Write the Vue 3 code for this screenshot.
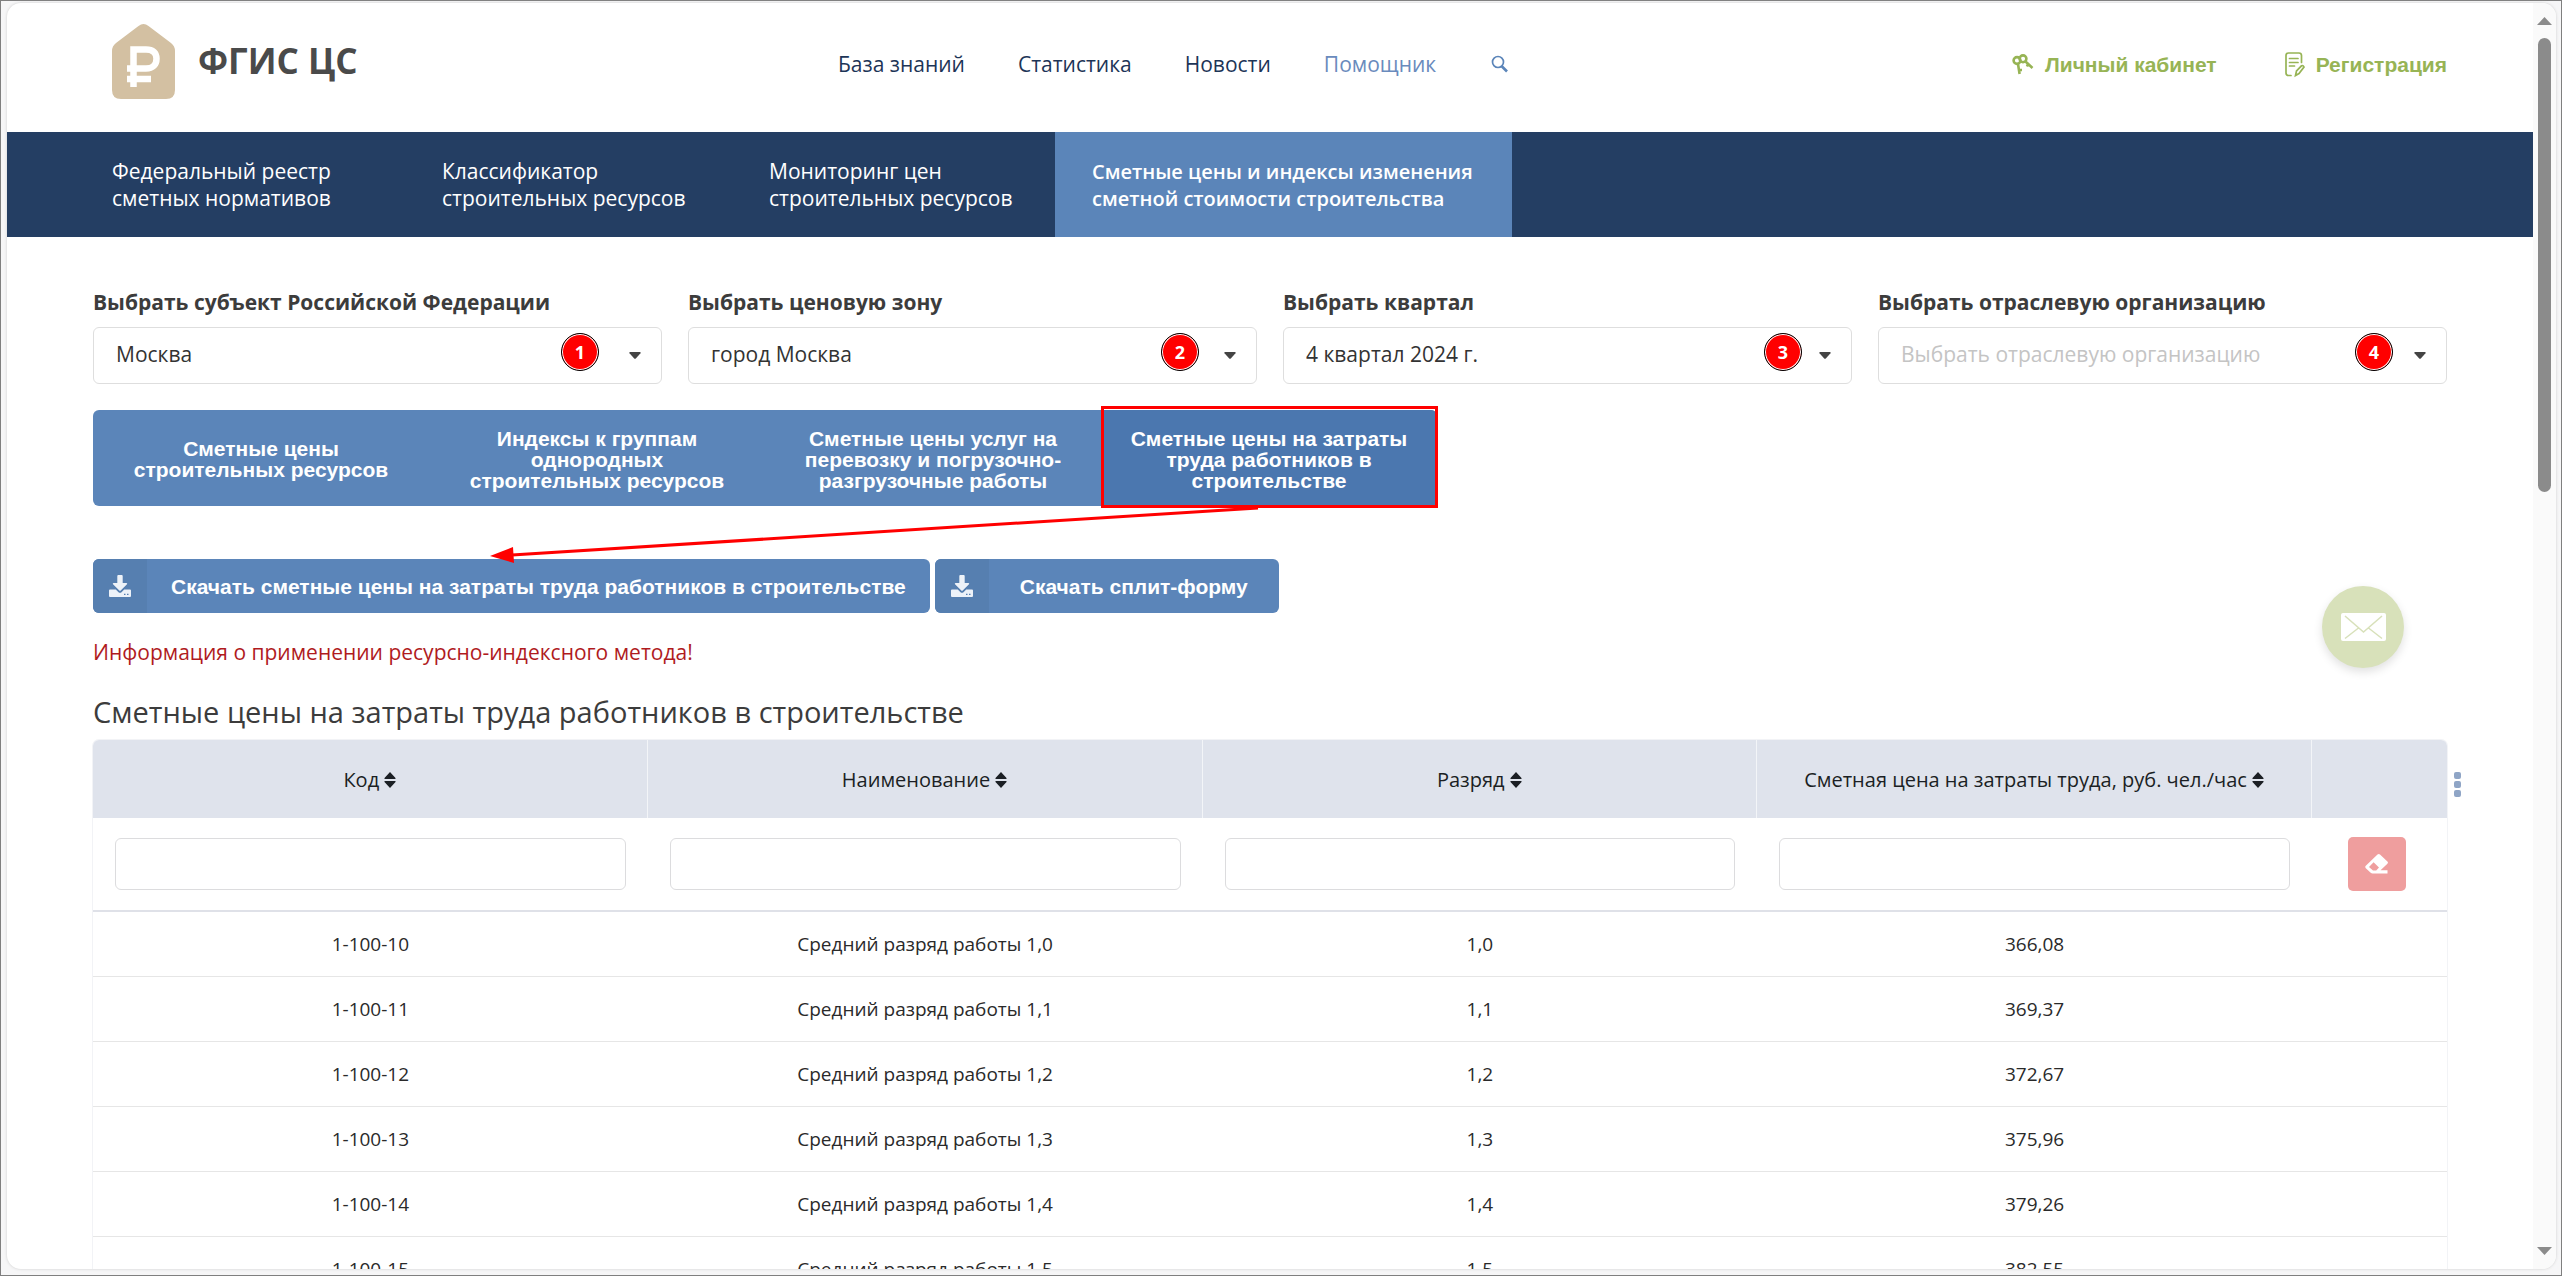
<script setup>
import { ref } from 'vue'

const topLinks = [
  { text: 'База знаний' },
  { text: 'Статистика' },
  { text: 'Новости' },
  { text: 'Помощник', accent: true },
]

const sections = [
  { lines: ['Федеральный реестр', 'сметных нормативов'] },
  { lines: ['Классификатор', 'строительных ресурсов'] },
  { lines: ['Мониторинг цен', 'строительных ресурсов'] },
  { lines: ['Сметные цены и индексы изменения', 'сметной стоимости строительства'], active: true },
]

const filters = [
  { id: 'region', label: 'Выбрать субъект Российской Федерации', value: 'Москва', mark: 1, markRight: 63 },
  { id: 'zone', label: 'Выбрать ценовую зону', value: 'город Москва', mark: 2, markRight: 58 },
  { id: 'quarter', label: 'Выбрать квартал', value: '4 квартал 2024 г.', mark: 3, markRight: 50 },
  { id: 'org', label: 'Выбрать отраслевую организацию', value: 'Выбрать отраслевую организацию', empty: true, mark: 4, markRight: 54 },
]

const tabs = [
  { lines: ['Сметные цены', 'строительных ресурсов'] },
  { lines: ['Индексы к группам', 'однородных', 'строительных ресурсов'] },
  { lines: ['Сметные цены услуг на', 'перевозку и погрузочно-', 'разгрузочные работы'] },
  { lines: ['Сметные цены на затраты', 'труда работников в', 'строительстве'], active: true },
]

const downloads = ['Скачать сметные цены на затраты труда работников в строительстве', 'Скачать сплит-форму']

const columns = ['Код', 'Наименование', 'Разряд', 'Сметная цена на затраты труда, руб. чел./час']
const search = ref(['', '', '', ''])

const rows = [
  ['1-100-10', 'Средний разряд работы 1,0', '1,0', '366,08'],
  ['1-100-11', 'Средний разряд работы 1,1', '1,1', '369,37'],
  ['1-100-12', 'Средний разряд работы 1,2', '1,2', '372,67'],
  ['1-100-13', 'Средний разряд работы 1,3', '1,3', '375,96'],
  ['1-100-14', 'Средний разряд работы 1,4', '1,4', '379,26'],
  ['1-100-15', 'Средний разряд работы 1,5', '1,5', '382,55'],
]
</script>

<template>
  <div class="frame">
    <div class="window">
      <div class="page">
        <header class="header">
          <a class="brand" href="#">
            <svg class="logo" viewBox="0 0 63 75" aria-hidden="true">
              <path fill="#d3c0a2" d="M26.500 2Q31.500 -2 36.500 2L59 19Q63 22 63 27V66Q63 75 54 75H9Q0 75 0 66V27Q0 22 4 19Z" />
              <path fill="none" stroke="#fff" stroke-width="6.500" d="M21.500 63V25.500H34C41 25.500 44.500 29 44.500 34.700S41 44.500 34 44.500H15M15 55H39" />
            </svg>
            <span>ФГИС ЦС</span>
          </a>
          <nav class="top-links">
            <a v-for="l in topLinks" :key="l.text" href="#" :class="{ accent: l.accent }">{{ l.text }}</a>
            <button class="search" type="button" aria-label="Поиск">
              <svg viewBox="0 0 18 18" width="18" height="18">
                <circle cx="7" cy="7" r="5.500" fill="none" stroke="#5b85b9" stroke-width="1.700" />
                <path d="M10.500 11L16 16.500" stroke="#5b85b9" stroke-width="2.600" />
              </svg>
            </button>
          </nav>
          <div class="account">
            <a href="#">
              <svg viewBox="0 0 22 22" width="22" height="22" aria-hidden="true">
                <g fill="none" stroke="#97b455" stroke-width="2.600">
                  <circle cx="5" cy="6.500" r="3.400" />
                  <circle cx="11" cy="4.800" r="3.400" />
                  <path d="M6 10L7.600 20M7 16H10M13.500 7.500L20.500 14M16 10L15 12.500" />
                </g>
              </svg>
              Личный кабинет
            </a>
            <a href="#">
              <svg viewBox="0 0 20 26" width="20" height="26" aria-hidden="true">
                <g fill="none" stroke="#97b455" stroke-width="1.700" stroke-linecap="round">
                  <path d="M6 23.500H3.500Q1 23.500 1 21V3.500Q1 1 3.500 1H14Q16.500 1 16.500 3.500V10.500" />
                  <path d="M4.500 6.500H13M4.500 10.500H13M4.500 14H9.500" />
                  <path d="M10.500 23.500L11.500 19L16.500 13.800Q18.200 13 19 15L14 21.600Z" />
                </g>
              </svg>
              Регистрация
            </a>
          </div>
        </header>

        <nav class="sections">
          <a v-for="(s, i) in sections" :key="i" href="#" :class="{ active: s.active }">
            <span v-for="t in s.lines" :key="t">{{ t }}</span>
          </a>
        </nav>

        <main class="content">
          <form class="filters">
            <div v-for="f in filters" :key="f.id" class="field">
              <label :for="f.id">{{ f.label }}</label>
              <div class="control">
                <select :id="f.id" :class="{ empty: f.empty }">
                  <option>{{ f.value }}</option>
                </select>
                <span class="mark" :style="{ right: f.markRight + 'px' }">{{ f.mark }}</span>
                <svg class="caret" viewBox="0 0 12 7" aria-hidden="true"><path fill="#444" d="M1 0H11Q12 0.500 11.500 1.200L6.800 6.500Q6 7.200 5.200 6.500L0.500 1.200Q0 0.500 1 0Z" /></svg>
              </div>
            </div>
          </form>

          <div class="tabs">
            <button v-for="(t, i) in tabs" :key="i" type="button" :class="{ active: t.active }">
              <span v-for="l in t.lines" :key="l">{{ l }}</span>
            </button>
            <svg class="arrow" viewBox="0 0 770 58" aria-hidden="true">
              <path d="M768 3L22 50" stroke="#f00" stroke-width="3" />
              <path d="M0 51L23 42L24 58Z" fill="#f00" />
            </svg>
          </div>

          <div class="downloads">
            <button v-for="d in downloads" :key="d" type="button">
              <span class="dl-icon">
                <svg viewBox="0 0 22 22" width="22" height="22" aria-hidden="true">
                  <path fill="#edf2f8" d="M8.300 1Q8.300 0 9.300 0H12.700Q13.700 0 13.700 1V8H17.500Q18.700 8.200 18 9.300L11.700 15.600Q11 16.200 10.300 15.600L4 9.300Q3.300 8.200 4.500 8H8.300Z" />
                  <path fill="#edf2f8" d="M1 14.600H6.800L9.500 17.200Q11 18.400 12.500 17.200L15.200 14.600H21Q22 14.600 22 15.600V21Q22 22 21 22H1Q0 22 0 21V15.600Q0 14.600 1 14.600Z" />
                  <path fill="#567fb0" d="M15 18.800H16.500V20H15ZM18 18.800H19.500V20H18Z" />
                </svg>
              </span>
              <span class="dl-text">{{ d }}</span>
            </button>
          </div>

          <a class="notice" href="#">Информация о применении ресурсно-индексного метода!</a>

          <h1>Сметные цены на затраты труда работников в строительстве</h1>

          <div class="grid">
            <table>
              <colgroup>
                <col v-for="c in columns" :key="c" />
                <col class="tools" />
              </colgroup>
              <thead>
                <tr class="titles">
                  <th v-for="c in columns" :key="c" scope="col">
                    {{ c }}
                    <svg class="sort" viewBox="0 0 12 16" aria-hidden="true"><path fill="#1b1f24" d="M6 0L11.500 6Q12 7 11 7H1Q0 7 0.500 6ZM6 16L11.500 10Q12 9 11 9H1Q0 9 0.500 10Z" /></svg>
                  </th>
                  <th></th>
                </tr>
                <tr class="search-row">
                  <td v-for="(c, i) in columns" :key="c">
                    <input v-model="search[i]" type="text" :aria-label="c" />
                  </td>
                  <td>
                    <button class="clear" type="button" aria-label="Очистить">
                      <svg viewBox="0 0 24 20" width="24" height="20">
                        <path fill="#fff" fill-rule="evenodd" d="M12.500 0.600Q13.800 -0.500 15 0.600L22.400 7.400Q23.500 8.600 22.400 9.800L15.500 16.300H22.500V19.500H7.500Q6.500 19.500 5.700 18.700L0.800 14.200Q-0.300 13 0.800 11.800ZM8.600 8.300L4 13L8 16.500H11.200L14 13.600Z" />
                      </svg>
                    </button>
                  </td>
                </tr>
              </thead>
              <tbody>
                <tr v-for="r in rows" :key="r[0]">
                  <td v-for="(v, i) in r" :key="i">{{ v }}</td>
                  <td></td>
                </tr>
              </tbody>
            </table>
            <button class="menu" type="button" aria-label="Меню таблицы"><i></i><i></i><i></i></button>
          </div>
        </main>
      </div>

      <div class="scrollbar" aria-hidden="true">
        <svg viewBox="0 0 15 8" width="15" height="8"><path fill="#8b8b8b" d="M7.500 0L15 8H0Z" /></svg>
        <div class="track"><div class="thumb"></div></div>
        <svg viewBox="0 0 15 8" width="15" height="8"><path fill="#8b8b8b" d="M7.500 8L15 0H0Z" /></svg>
      </div>

      <button class="mail" type="button" aria-label="Написать">
        <svg viewBox="0 0 45 28" width="45" height="28">
          <rect width="45" height="28" rx="2" fill="#fff" />
          <path fill="none" stroke="#d8e1ba" stroke-width="1.500" d="M4 3L22.500 19L41 3M4 25.500L17.500 15M41 25.500L27.500 15" />
        </svg>
      </button>
    </div>
  </div>
</template>

<style>
body {
  margin: 0;
}
</style>

<style scoped>
* {
  box-sizing: border-box;
}
.frame {
  height: 100vh;
  padding: 2px 5px 6px 6px;
  border: 1px solid #7f7f7f;
  background: #f6f6f7;
  font-family: "Open Sans", sans-serif;
  color: #222;
}
.window {
  position: relative;
  display: flex;
  height: 100%;
  overflow: hidden;
  border-radius: 14px;
  background: #fff;
  box-shadow: 0 0 3px #ccc;
}
.page {
  flex: 1;
  min-width: 0;
  overflow: hidden;
}
a {
  color: inherit;
  text-decoration: none;
}
button {
  padding: 0;
  border: 0;
  background: none;
  font: inherit;
  color: inherit;
  cursor: pointer;
}

/* header */
.header {
  display: grid;
  grid-template-columns: 726px 1fr auto;
  align-items: center;
  height: 129px;
  padding: 0 86px 6px 105px;
}
.brand {
  display: flex;
  gap: 23px;
  align-items: center;
  padding-bottom: 6px;
  font-size: 35px;
  font-weight: 700;
  line-height: 42px;
  color: #4a4a4a;
}
.brand span {
  padding-bottom: 2px;
}
.logo {
  width: 63px;
  height: 75px;
}
.top-links {
  display: flex;
  gap: 53px;
  align-items: center;
  padding-bottom: 2px;
  font-size: 21px;
  font-weight: 400;
  color: #1d3557;
}
.top-links .accent {
  color: #6a8bbd;
}
.search {
  display: flex;
  padding: 0 2px;
}
.account {
  display: flex;
  gap: 68px;
  font: bold 21px "Liberation Sans", sans-serif;
  color: #97b455;
}
.account a {
  display: flex;
  gap: 11px;
  align-items: center;
}

/* section bar */
.sections {
  display: flex;
  height: 105px;
  padding-left: 63px;
  background: #243e63;
  color: #fff;
  font-size: 21px;
  line-height: 27px;
}
.sections a {
  display: flex;
  flex-direction: column;
  justify-content: center;
  width: 327px;
  padding-left: 41px;
  white-space: nowrap;
}
.sections a:first-child {
  width: 331px;
  padding-left: 42px;
}
.sections .active {
  width: 457px;
  padding-left: 37px;
  background: #5b85b9;
  font-size: 20px;
  font-weight: 600;
}

/* content */
.content {
  display: flex;
  flex-direction: column;
  align-items: flex-start;
  padding: 50px 86px 0;
}
.filters {
  display: grid;
  grid-template-columns: repeat(4, 1fr);
  gap: 26px;
  width: 100%;
}
.field label {
  display: block;
  font-size: 21px;
  font-weight: 700;
  line-height: 30px;
  color: #3c3c3c;
}
.control {
  position: relative;
  margin-top: 10px;
}
.control select {
  appearance: none;
  width: 100%;
  height: 57px;
  padding: 0 22px 3px;
  border: 1px solid #dedede;
  border-radius: 6px;
  background: #fff;
  font: 400 21px "Open Sans", sans-serif;
  color: #333;
}
.control select.empty {
  color: #c4c4c4;
}
.caret {
  position: absolute;
  right: 21px;
  top: 25px;
  width: 12px;
  height: 7px;
}
.mark {
  position: absolute;
  top: 6px;
  width: 38px;
  height: 38px;
  border: 1px solid #000;
  border-radius: 50%;
  background: #f00;
  box-shadow: inset 0 0 0 1px #fff;
  color: #fff;
  font: bold 18px/36px "Open Sans", sans-serif;
  text-align: center;
}

.tabs {
  position: relative;
  display: flex;
  margin-top: 26px;
  border-radius: 6px;
  background: #5b85b9;
  color: #fff;
  font: bold 21px/21px "Liberation Sans", sans-serif;
}
.tabs button {
  position: relative;
  display: flex;
  flex-direction: column;
  align-items: center;
  justify-content: center;
  width: 336px;
  height: 96px;
  padding-top: 2px;
  white-space: nowrap;
}
.tabs .active {
  border-radius: 0 6px 6px 0;
  background: #4b77af;
}
.tabs .active::after {
  content: "";
  position: absolute;
  inset: -4px -1px -2px 0;
  border: 3px solid #f00;
}
.arrow {
  position: absolute;
  left: 397px;
  top: 95px;
  width: 770px;
  height: 58px;
}

.downloads {
  display: flex;
  gap: 5px;
  margin-top: 53px;
}
.downloads button {
  display: flex;
  align-items: center;
  min-width: 344px;
  height: 54px;
  overflow: hidden;
  border-radius: 6px;
  background: #5b85b9;
  color: #fff;
  font: bold 21px "Liberation Sans", sans-serif;
}
.dl-icon {
  display: flex;
  align-items: center;
  justify-content: center;
  width: 54px;
  height: 54px;
  background: #567fb0;
}
.dl-text {
  flex: 1;
  padding: 2px 24px 0;
  text-align: center;
}
.notice {
  margin-top: 24px;
  font-size: 21px;
  line-height: 30px;
  color: #b01b1e;
}
h1 {
  margin: 24px 0 7px;
  font-size: 29px;
  font-weight: 400;
  line-height: 42px;
  color: #3c3c3c;
}

/* table */
.grid {
  position: relative;
  width: 100%;
}
table {
  width: 100%;
  border-collapse: separate;
  border-spacing: 0;
  table-layout: fixed;
  border-radius: 6px 6px 0 0;
  box-shadow: 0 0 0 1px #f2f3f6;
  font-size: 19px;
  text-align: center;
}
.tools {
  width: 135px;
}
th {
  height: 78px;
  padding: 0;
  border-right: 1px solid #f3f5f8;
  background: #dfe3ec;
  font-size: 20px;
  font-weight: 400;
  color: #1b1f24;
}
th:first-child {
  border-radius: 6px 0 0 0;
}
th:last-child {
  border-right: 0;
  border-radius: 0 6px 0 0;
}
.sort {
  width: 12px;
  height: 16px;
  vertical-align: -1px;
}
.search-row td {
  height: 94px;
  padding: 0 22px;
  border-bottom: 2px solid #dfe1e8;
}
.search-row input {
  display: block;
  width: 100%;
  height: 52px;
  padding: 0 16px;
  border: 1px solid #dcdcde;
  border-radius: 6px;
  background: #fff;
  font: inherit;
}
.clear {
  display: flex;
  align-items: center;
  justify-content: center;
  width: 58px;
  height: 54px;
  margin: 0 14px;
  border-radius: 5px;
  background: #ef9e9e;
}
tbody td {
  height: 65px;
  padding: 0;
  border-bottom: 1px solid #e6e6e6;
  color: #2a2a2a;
}
.menu {
  position: absolute;
  left: 100%;
  top: 32px;
  display: flex;
  flex-direction: column;
  gap: 2px;
  margin-left: 7px;
}
.menu i {
  width: 7px;
  height: 7px;
  border-radius: 2px;
  background: #8fa5c6;
}

/* right edge */
.scrollbar {
  display: flex;
  flex-direction: column;
  align-items: center;
  width: 23px;
  padding: 14px 0;
  background: #fafafa;
}
.track {
  flex: 1;
  padding: 13px 0;
}
.thumb {
  width: 13px;
  height: 38%;
  border-radius: 7px;
  background: #8b8b8b;
}
.mail {
  position: absolute;
  right: 152px;
  top: 583px;
  display: flex;
  align-items: center;
  justify-content: center;
  width: 82px;
  height: 82px;
  border-radius: 50%;
  background: #d8e1ba;
  box-shadow: 0 4px 10px rgba(0, 0, 0, 0.12);
}
</style>
